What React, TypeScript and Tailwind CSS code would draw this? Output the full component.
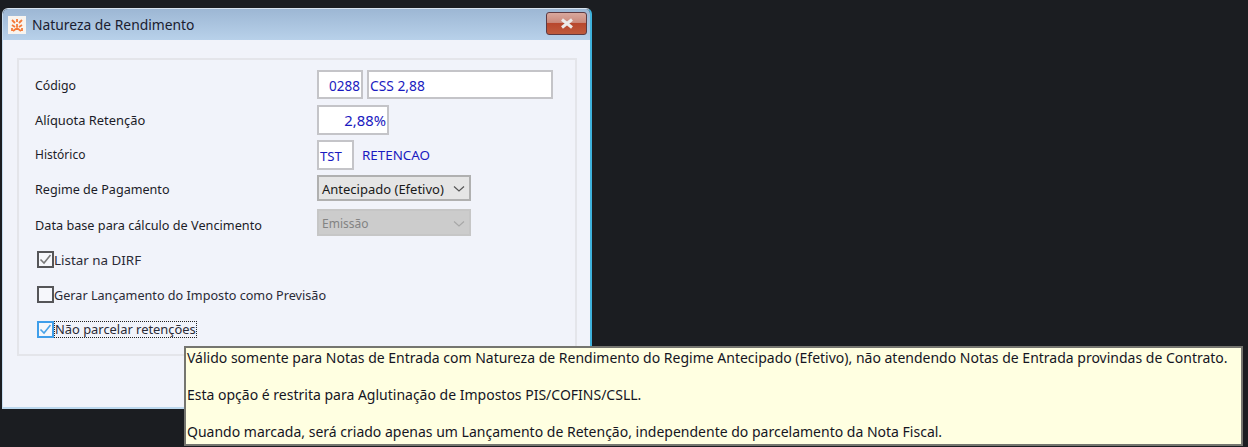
import { FC, ReactNode } from 'react';

const blue = 'text-[#1a1ac0]';

const FieldRow: FC<{ label: string; className: string; labelClass?: string; children: ReactNode }> = ({
  label,
  className,
  labelClass = 'text-[12.6px]',
  children
}) => (
  <div className={`flex items-center ${className}`}>
    <span className={`w-[282px] shrink-0 text-[#1c1c28] ${labelClass}`}>{label}</span>
    {children}
  </div>
);

const Chevron: FC<{ color: string }> = ({ color }) => (
  <svg width="14" height="8" viewBox="0 0 14 8" fill="none" className="shrink-0">
    <path d="M2 1.5 L7 6 L12 1.5" stroke={color} strokeWidth="1.2" />
  </svg>
);

const CheckRow: FC<{ label: string; checked?: boolean; focused?: boolean; className: string; labelClass: string }> = ({
  label,
  checked,
  focused,
  className,
  labelClass
}) => {
  const stroke = focused ? '#4aa3e8' : '#7a7a7a';
  return (
    <div className={`flex h-[17px] items-center ${className}`}>
      <div
        className={`flex h-[17px] w-[17px] shrink-0 items-center justify-center border-2 bg-[#f6f7fb] ${
          focused ? 'border-[#3f9eea]' : 'border-[#555558]'
        }`}
      >
        {checked && (
          <svg width="13" height="13" viewBox="0 0 13 13" fill="none">
            <path d="M1.5 6.5 L5 10 L11.5 2" stroke={stroke} strokeWidth="1.6" />
          </svg>
        )}
      </div>
      <span
        className={`text-[#2a2a36] ${labelClass} ${focused ? 'border border-dotted border-[#222] leading-[15px]' : ''}`}
      >
        {label}
      </span>
    </div>
  );
};

const App: FC = () => {
  return (
    <div className="relative h-[447px] w-[1248px] overflow-hidden bg-[#1b1d21] pl-[2px] pt-[8px] font-['Noto_Sans',sans-serif] text-[12px] leading-[16px]">
      {/* Window */}
      <div className="flex h-[401px] w-[590px] flex-col overflow-hidden rounded-t-[6px] border-r-2 border-b-2 border-l border-t border-r-[#3fb2dc] border-b-[#bcd8ee] border-l-[#c6dcef] border-t-[#d8e4f0]">
        <div className="flex h-[31px] shrink-0 items-center bg-gradient-to-b from-[#9db7d4] to-[#b8d1ea] pl-[5px] pr-[3px]">
          <div className="flex h-[18px] w-[18px] items-center justify-center bg-[#f8f4ef]">
            <svg width="14" height="14" viewBox="0 0 14 14" fill="none">
              <path d="M2 2 L5 5 M12 2 L9 5 M7 1 V4 M2 7 L5 9 M12 7 L9 9 M7 6 V9 M3 13 L7 10 L11 13 M2 10 V13 M12 10 V13" stroke="#f47a3a" strokeWidth="1.8" />
            </svg>
          </div>
          <span className="ml-[6px] text-[13.85px] text-[#1a2030]">Natureza de Rendimento</span>
          <div className="ml-auto mb-[2px] flex h-[23px] w-[41px] items-center justify-center rounded-[3px] border border-[#5d3a42] bg-[linear-gradient(to_bottom,#d9a89e_0%,#cb8a7c_45%,#b8472d_50%,#bf5a3c_100%)]">
            <svg width="16" height="11" viewBox="0 0 16 11" fill="none">
              <path d="M3 1.5 L13 9.5 M13 1.5 L3 9.5" stroke="#ecebea" strokeWidth="3" />
            </svg>
          </div>
        </div>

        <div className="flex-1 bg-[#f1f3fa] pl-[14px] pr-[13px] pt-[18px]">
          {/* Group box */}
          <div className="h-[298px] border-2 border-[#e4e5ea] pl-[16px] pt-[10px]">
            <FieldRow label="Código" className="h-[29px]" labelClass="pt-[2px] text-[12.3px]">
              <div className={`flex h-[29px] w-[46px] items-center justify-end border-2 border-[#c4c4c8] bg-white pr-[1px] pt-[2px] text-[13.5px] ${blue}`}>
                0288
              </div>
              <div className={`ml-[4px] flex h-[29px] w-[186px] items-center border-2 border-[#c4c4c8] bg-white pl-[1px] pt-[2px] text-[13.8px] ${blue}`}>
                CSS 2,88
              </div>
            </FieldRow>
            <FieldRow label="Alíquota Retenção" className="mt-[6px] h-[30px]" labelClass="text-[12.9px]">
              <div className={`flex h-[30px] w-[72px] items-center justify-end border-2 border-[#c4c4c8] bg-white pr-[1px] text-[14.8px] ${blue}`}>
                2,88%
              </div>
            </FieldRow>
            <FieldRow label="Histórico" className="mt-[5px] h-[30px]" labelClass="text-[12px]">
              <div className={`flex h-[30px] w-[37px] items-center border-2 border-[#c4c4c8] bg-white pl-[1px] pt-[2px] text-[13.2px] ${blue}`}>TST</div>
              <span className={`ml-[8px] text-[13.4px] ${blue}`}>RETENCAO</span>
            </FieldRow>
            <FieldRow label="Regime de Pagamento" className="mt-[5px] h-[26px]" labelClass="pt-[3px] text-[12.6px]">
              <div className="flex h-[26px] w-[154px] items-center justify-between border-2 border-[#b0b0b0] bg-[#e5e5e5] pl-[3px] pr-[3px] pt-[2px] text-[13px] text-[#1a1a1a]">
                Antecipado (Efetivo)
                <Chevron color="#555" />
              </div>
            </FieldRow>
            <FieldRow label="Data base para cálculo de Vencimento" className="mt-[8px] h-[27px]" labelClass="pt-[4px] text-[12.7px]">
              <div className="flex h-[27px] w-[154px] items-center justify-between border-2 border-[#c6c6c6] bg-[#cccccc] pl-[3px] pr-[3px] pt-[2px] text-[#838383]">
                Emissão
                <Chevron color="#a8a8a8" />
              </div>
            </FieldRow>
            <CheckRow label="Listar na DIRF" checked className="ml-[2px] mt-[15px]" labelClass="text-[13.4px]" />
            <CheckRow label="Gerar Lançamento do Imposto como Previsão" className="ml-[2px] mt-[18px]" labelClass="text-[12.65px]" />
            <CheckRow label="Não parcelar retenções" checked focused className="ml-[2px] mt-[18px]" labelClass="text-[12.9px]" />
          </div>
        </div>
      </div>

      {/* Tooltip */}
      <div className="absolute left-[184px] top-[346px] h-[100px] w-[1059px] border-2 border-[#75756f] bg-[#ffffe1] pl-[1px] text-[14px] leading-[19px] text-[#15151f]">
        <p>Válido somente para Notas de Entrada com Natureza de Rendimento do Regime Antecipado (Efetivo), não atendendo Notas de Entrada provindas de Contrato.</p>
        <p className="mt-[18px]">Esta opção é restrita para Aglutinação de Impostos PIS/COFINS/CSLL.</p>
        <p className="mt-[18px]">Quando marcada, será criado apenas um Lançamento de Retenção, independente do parcelamento da Nota Fiscal.</p>
      </div>
    </div>
  );
};

export default App;
